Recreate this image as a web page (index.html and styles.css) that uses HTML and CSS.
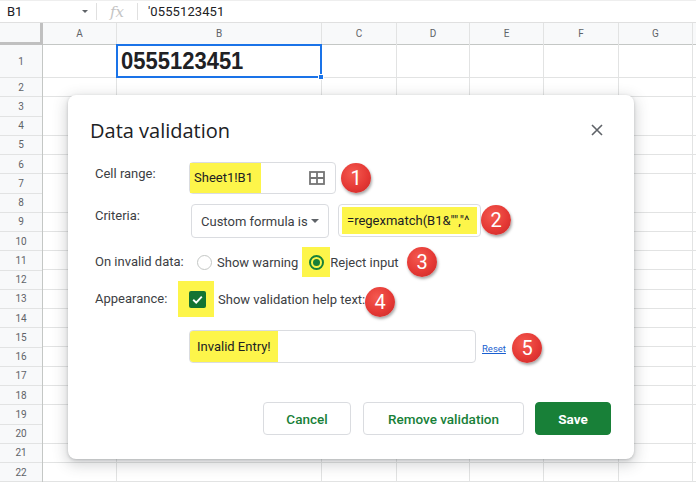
FILE: index.html
```html
<!DOCTYPE html>
<html lang="en">
<head>
<meta charset="utf-8">
<title>Data validation</title>
<link rel="stylesheet" href="styles.css">
</head>
<body>
<div class="app">
  <div class="fbar">
    <div class="namebox"><span>B1</span><span class="nb-caret"></span></div>
    <div class="sep"></div>
    <div class="fx">fx</div>
    <div class="sep"></div>
    <div class="ftext">'0555123451</div>
  </div>

  <div class="sheet">
    <div class="col rowhead">
      <div class="corner"></div>
      <div class="rh tall">1</div>
      <div class="rh">2</div><div class="rh">3</div><div class="rh">4</div><div class="rh">5</div>
      <div class="rh">6</div><div class="rh">7</div><div class="rh">8</div><div class="rh">9</div>
      <div class="rh">10</div><div class="rh">11</div><div class="rh">12</div><div class="rh">13</div>
      <div class="rh">14</div><div class="rh">15</div><div class="rh">16</div><div class="rh">17</div>
      <div class="rh">18</div><div class="rh">19</div><div class="rh">20</div><div class="rh">21</div>
      <div class="rh">22</div>
    </div>
    <div class="col"><div class="ch">A</div><div class="cell tall"></div><div class="body"></div></div>
    <div class="col"><div class="ch">B</div><div class="cell tall selected"><span class="value">0555123451</span><span class="handle"></span></div><div class="body"></div></div>
    <div class="col"><div class="ch">C</div><div class="cell tall"></div><div class="body"></div></div>
    <div class="col"><div class="ch">D</div><div class="cell tall"></div><div class="body"></div></div>
    <div class="col"><div class="ch">E</div><div class="cell tall"></div><div class="body"></div></div>
    <div class="col"><div class="ch">F</div><div class="cell tall"></div><div class="body"></div></div>
    <div class="col"><div class="ch">G</div><div class="cell tall"></div><div class="body"></div></div>
    <div class="col last"><div class="ch"></div><div class="cell tall"></div><div class="body"></div></div>
  </div>

  <div class="dialog">
    <div class="dlg-head">
      <h1 class="dlg-title">Data validation</h1>
      <span class="close">
        <svg width="12" height="12" viewBox="0 0 12 12"><path d="M1 1L11 11M11 1L1 11" stroke="#5f6368" stroke-width="1.6" fill="none"/></svg>
      </span>
    </div>

    <div class="row r-range">
      <div class="lbl">Cell range:</div>
      <div class="field range-field">
        <span class="hl">Sheet1!B1</span>
        <svg class="grid-ico" width="16" height="14" viewBox="0 0 16 14"><rect x="1" y="1" width="14" height="12" fill="none" stroke="#757575" stroke-width="1.8"/><path d="M8 1V13M1 7H15" stroke="#757575" stroke-width="1.8"/></svg>
      </div>
    </div>

    <div class="row r-crit">
      <div class="lbl">Criteria:</div>
      <div class="select">Custom formula is<span class="sel-caret"></span></div>
      <div class="field formula-field"><span class="hl">=regexmatch(B1&amp;"","^</span></div>
    </div>

    <div class="row r-inv">
      <div class="lbl">On invalid data:</div>
      <span class="radio"></span>
      <span class="opt">Show warning</span>
      <span class="hl hl-radio"><span class="radio on"></span></span>
      <span class="opt opt-reject">Reject input</span>
    </div>

    <div class="row r-app">
      <div class="lbl">Appearance:</div>
      <span class="hl hl-check"><span class="check"><svg width="13" height="13" viewBox="0 0 13 13"><path d="M2.2 6.8L5.2 9.6L10.8 3.6" stroke="#fff" stroke-width="1.9" fill="none"/></svg></span></span>
      <span class="opt">Show validation help text:</span>
    </div>

    <div class="row r-help">
      <div class="lbl"></div>
      <div class="field help-field"><span class="hl">Invalid Entry!</span></div>
      <a class="reset">Reset</a>
    </div>

    <div class="actions">
      <button class="btn btn-cancel">Cancel</button>
      <button class="btn btn-remove">Remove validation</button>
      <button class="btn btn-save">Save</button>
    </div>
  </div>

  <span class="badge b1">1</span>
  <span class="badge b2">2</span>
  <span class="badge b3">3</span>
  <span class="badge b4">4</span>
  <span class="badge b5">5</span>
</div>
</body>
</html>
```

FILE: styles.css
```css
* { box-sizing: border-box; margin: 0; padding: 0; }

body {
  width: 696px;
  height: 482px;
  overflow: hidden;
  background: #fff;
  font-family: Roboto, "Liberation Sans", sans-serif;
  color: #202124;
}

.app {
  position: relative;
  width: 696px;
  height: 482px;
  overflow: hidden;
}

/* formula bar */
.fbar {
  height: 23px;
  display: flex;
  align-items: center;
  border-top: 1px solid #eeeeee;
  border-bottom: 1px solid #e0e0e0;
  font-size: 13px;
  color: #202124;
}
.namebox {
  width: 96px;
  display: flex;
  align-items: center;
  justify-content: space-between;
  padding: 0 8px 0 7px;
}
.nb-caret {
  width: 0; height: 0;
  border-left: 3px solid transparent;
  border-right: 3px solid transparent;
  border-top: 3px solid #5f6368;
}
.sep { width: 1px; height: 17px; background: #e0e0e0; }
.fx {
  width: 40px;
  text-align: center;
  font-family: "DejaVu Serif", serif;
  font-style: italic;
  font-size: 15px;
  color: #c4c4c4;
}
.ftext { padding-left: 10px; letter-spacing: 0.1px; }

/* sheet grid */
.sheet {
  display: grid;
  grid-template-columns: 43px 74px 205px 75px 73px 74px 75px 74px 1fr;
  height: 459px;
  overflow: hidden;
}
.col {
  display: flex;
  flex-direction: column;
  border-right: 1px solid #e2e3e3;
}
.col.last { border-right: none; }
.ch {
  height: 22px;
  flex: none;
  background: #f8f9fa;
  border-bottom: 1px solid #c4c7c5;
  font-size: 10px;
  color: #5f6368;
  display: flex;
  align-items: center;
  justify-content: center;
}
.cell {
  flex: none;
  border-bottom: 1px solid #e2e3e3;
}
.tall { height: 33px; }
.body {
  flex: 1;
  background: repeating-linear-gradient(to bottom, transparent 0, transparent 18.25px, #e2e3e3 18.25px, #e2e3e3 19.25px);
}

.rowhead {
  background: #f8f9fa;
  border-right: 1px solid #c4c7c5;
}
.corner {
  height: 22px;
  flex: none;
  border-right: 3px solid #c0c0c0;
  border-bottom: 3px solid #c0c0c0;
  margin-right: -1px;
}
.rh {
  height: 19.25px;
  flex: none;
  border-bottom: 1px solid #e2e3e3;
  font-size: 10px;
  color: #5f6368;
  display: flex;
  align-items: center;
  justify-content: center;
}
.rh.tall { height: 33px; }

.selected {
  position: relative;
  border: 2px solid #1a73e8;
  margin-left: -1px;
  margin-right: -1px;
  margin-top: -1px;
  height: 34px;
  display: flex;
  align-items: center;
  padding-left: 3px;
}
.value {
  font-family: "Liberation Sans", Arial, sans-serif;
  font-weight: 700;
  font-size: 22px;
  color: #202124;
  transform: scaleY(1.12);
}
.handle {
  position: absolute;
  right: -4px;
  bottom: -4px;
  width: 6px;
  height: 6px;
  background: #1a73e8;
  border: 1px solid #fff;
}

/* dialog */
.dialog {
  position: absolute;
  left: 68px;
  top: 95px;
  width: 566px;
  display: flex;
  flex-direction: column;
  padding: 23px 23px 24px 22px;
  background: #fff;
  border-radius: 8px;
  box-shadow: 0 4px 14px 2px rgba(60, 64, 67, 0.22), 0 1px 3px rgba(60, 64, 67, 0.25);
}
.dlg-head {
  height: 24px;
  display: flex;
  align-items: center;
  justify-content: space-between;
}
.dlg-title {
  font-family: "Open Sans", sans-serif;
  font-weight: 400;
  font-size: 20px;
  letter-spacing: 0;
  color: #202124;
}
.close {
  width: 24px;
  height: 24px;
  margin-right: 2px;
  display: flex;
  align-items: center;
  justify-content: center;
}

.row {
  display: flex;
  align-items: center;
  padding-left: 5px;
  font-size: 13px;
  color: #3c4043;
}
.lbl {
  width: 94px;
  flex: none;
  line-height: 20px;
  color: #3c4043;
}
.r-range { margin-top: 20px; height: 32px; align-items: flex-start; }
.r-crit { margin-top: 10px; height: 34px; align-items: flex-start; }
.r-range .lbl, .r-crit .lbl { padding-top: 2px; }
.r-inv { margin-top: 9px; height: 30px; }
.r-app { margin-top: 4px; height: 36px; }
.r-help { margin-top: 13px; height: 33px; }

.hl { background: #fdf54a; }

.field {
  display: flex;
  align-items: center;
  height: 100%;
  border: 1px solid #dadce0;
  border-radius: 4px;
  color: #202124;
}
.range-field {
  width: 147px;
  justify-content: space-between;
  padding: 0 10px 0 0;
}
.range-field .hl {
  align-self: stretch;
  display: flex;
  align-items: center;
  padding: 0 4px;
  width: 71px;
  margin-top: -0.5px;
}
.select {
  width: 138px;
  height: 100%;
  margin-left: 2px;
  border: 1px solid #dadce0;
  border-radius: 4px;
  display: flex;
  align-items: center;
  justify-content: space-between;
  padding: 0 9px;
  color: #3c4043;
}
.sel-caret {
  width: 0; height: 0;
  border-left: 4px solid transparent;
  border-right: 4px solid transparent;
  border-top: 4px solid #5f6368;
}
.formula-field {
  width: 143px;
  height: 33px;
  margin-left: 9px;
  padding: 2px 3px;
  overflow: hidden;
}
.formula-field .hl {
  align-self: stretch;
  flex: 1;
  display: flex;
  align-items: center;
  padding-left: 5px;
  white-space: nowrap;
  overflow: hidden;
}

.radio {
  width: 15px;
  height: 15px;
  border-radius: 50%;
  border: 1.5px solid #c4c7c5;
  flex: none;
  display: flex;
  align-items: center;
  justify-content: center;
}
.r-inv > .radio:first-of-type { margin-left: 8px; }
.radio.on { border: 2px solid #188038; }
.radio.on::after {
  content: "";
  width: 7px;
  height: 7px;
  border-radius: 50%;
  background: #188038;
}
.opt { color: #3c4043; margin-left: 5px; }
.hl-radio {
  width: 28px;
  height: 30px;
  margin-left: 4px;
  display: flex;
  align-items: center;
  justify-content: center;
}
.opt-reject { margin-left: 0; }

.hl-check {
  width: 36px;
  height: 36px;
  margin-left: -11px;
  padding-left: 11px;
  display: flex;
  align-items: center;
}
.check {
  width: 17px;
  height: 17px;
  border-radius: 2px;
  background: #137333;
  display: flex;
  align-items: center;
  justify-content: center;
}
.r-app .opt { margin-left: 4px; }

.help-field {
  width: 287px;
  padding: 0;
}
.help-field .hl {
  align-self: stretch;
  width: 88px;
  display: flex;
  align-items: center;
  padding-left: 7px;
  border-radius: 3px 0 0 3px;
}
.reset {
  margin-left: 6px;
  font-size: 9.5px;
  color: #1a5fd0;
  text-decoration: underline;
  margin-top: 4px;
}

.actions {
  margin-top: 39px;
  height: 33px;
  display: flex;
  justify-content: flex-end;
  gap: 11px;
}
.btn {
  height: 33px;
  border: 1px solid #dadce0;
  border-radius: 4px;
  background: #fff;
  font-family: Roboto, sans-serif;
  font-weight: 500;
  font-size: 13.5px;
  color: #188038;
  display: flex;
  align-items: center;
  justify-content: center;
}
.btn-cancel { width: 88px; margin-right: 1px; }
.btn-remove { width: 161px; }
.btn-save { width: 76px; background: #188038; border-color: #188038; color: #fff; font-weight: 700; }

/* annotation badges */
.badge {
  position: absolute;
  width: 30px;
  height: 30px;
  border-radius: 50%;
  background: radial-gradient(circle at 40% 35%, #f45a50 0%, #e53935 55%, #c62828 100%);
  box-shadow: 1px 2px 3px rgba(0, 0, 0, 0.35);
  color: #fff;
  font-family: Roboto, sans-serif;
  font-size: 20px;
  display: flex;
  align-items: center;
  justify-content: center;
}
.b1 { left: 341px; top: 163px; }
.b2 { left: 481px; top: 205px; }
.b3 { left: 407px; top: 247px; }
.b4 { left: 365px; top: 287px; }
.b5 { left: 512px; top: 333px; }
```
